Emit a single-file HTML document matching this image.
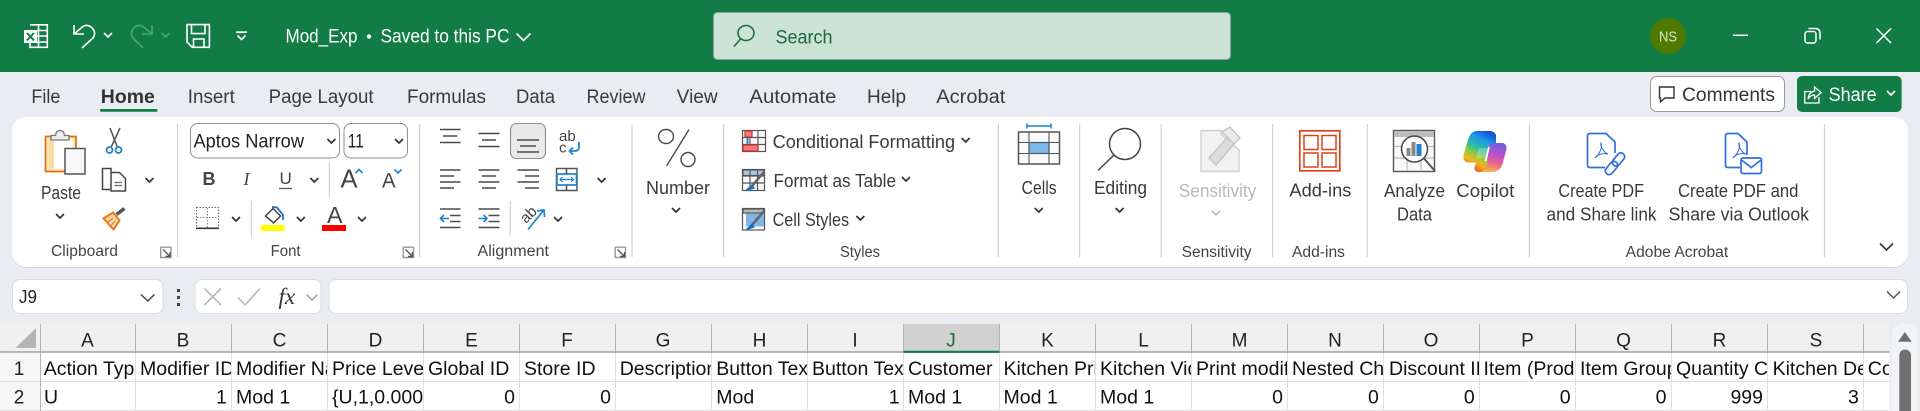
<!DOCTYPE html>
<html lang="en">
<head>
<meta charset="utf-8">
<title>Mod_Exp - Excel</title>
<style>
html,body{margin:0;padding:0;width:1920px;height:411px;overflow:hidden;background:#e9edf1}
svg{display:block;font-family:"Liberation Sans",sans-serif}
text{fill:#3a3a3a;font-size:18.5px}
.tab text{font-size:19px}
.w text{fill:#fff;font-size:19px}
.lab text{font-size:15.5px;fill:#444}
.cell text{font-size:19.5px;fill:#111}
.hd text{font-size:19px;fill:#222;text-anchor:middle}
.ln{fill:none;stroke:#4a4a4a;stroke-width:1.6}
</style>
</head>
<body>
<svg width="1920" height="411" viewBox="0 0 1920 411" xmlns="http://www.w3.org/2000/svg">
<defs>
<path id="c" d="M-4-2L0 2 4-2" fill="none" stroke="#333" stroke-width="1.700"/>
<path id="cw" d="M-4-2L0 2 4-2" fill="none" stroke="#fff" stroke-width="1.600"/>
<g id="lau" fill="none" stroke="#555" stroke-width="1.400"><path d="M0.700 0.700H11V11H0.700Z" stroke="#999"/><path d="M3 3L10 10M10 5.500V10H5.500"/></g>
<linearGradient id="cp1" x1="0.700" y1="0" x2="0.300" y2="1"><stop offset="0" stop-color="#1550d8"/><stop offset=".22" stop-color="#1d9be8"/><stop offset=".45" stop-color="#2fc09a"/><stop offset=".62" stop-color="#9ccb35"/><stop offset=".78" stop-color="#f5b21c"/><stop offset="1" stop-color="#ee3f33"/></linearGradient>
<linearGradient id="cp2" x1="0.600" y1="0" x2="0.400" y2="1"><stop offset="0" stop-color="#6a5fe0"/><stop offset=".35" stop-color="#b44fd0"/><stop offset=".65" stop-color="#e85f9a"/><stop offset="1" stop-color="#fbb04a"/></linearGradient>
</defs>

<rect width="1920" height="411" fill="#e9edf1"/>
<!-- title bar -->
<rect width="1920" height="72" fill="#117c45"/>
<g fill="none" stroke="#fff" stroke-width="1.600">
<path d="M30 24.800H47.300V47.300H30V43M38.500 24.800V47.300M37 30.500H47.300M37 36H47.300M37 42H47.300"/>
<rect x="24" y="30" width="13" height="13" fill="#fff" stroke="none"/>
<path d="M27 33L34 40.500M34 33L27 40.500" stroke="#117c45" stroke-width="2"/>
<path d="M74 25V34H84M74 34L83 26.500Q87 24 91 27Q97 32 93 38L82 48"/>
<path d="M152 25V34H142M152 34L143 26.500Q139 24 135 27Q129 32 133 38L143 48" stroke="#4fa27c"/>
<path d="M187 24.600H209.400V47.300H192.300L187 42Z"/>
<path d="M191.500 24.600V33.600H205V24.600M193.500 47.300V39H204V47.300"/>
<path d="M236 32.200H247" stroke-width="1.800"/>
<path d="M237.500 35.500L241.500 39.500 245.500 35.500" stroke-width="1.600"/>
<path d="M516.500 33.500L523.500 40.500 530.500 33.500" stroke-width="1.600"/>
</g>
<use href="#cw" x="108" y="35"/>
<path d="M161.500 33L165.500 37 169.500 33" fill="none" stroke="#4fa27c" stroke-width="1.600"/>
<g class="w">
<text x="285.500" y="42.500" textLength="72" lengthAdjust="spacingAndGlyphs">Mod_Exp</text>
<circle cx="369" cy="36.500" r="2.200" fill="#fff"/>
<text x="380.500" y="42.500" textLength="129" lengthAdjust="spacingAndGlyphs">Saved to this PC</text>
</g>
<rect x="713.500" y="12.500" width="517" height="47" rx="4" fill="#cde2d6" stroke="#8aa595"/>
<ellipse cx="746" cy="33" rx="8" ry="7.500" fill="none" stroke="#17683e" stroke-width="1.500"/>
<path d="M740.500 39L734 46.500" stroke="#17683e" stroke-width="1.500"/>
<text x="775.500" y="43.500" textLength="57" lengthAdjust="spacingAndGlyphs" style="fill:#17693f;font-size:19px">Search</text>
<circle cx="1668" cy="36" r="18" fill="#4f7a00"/>
<text x="1659" y="41.500" textLength="18" lengthAdjust="spacingAndGlyphs" style="font-size:15px;fill:#d8e8c8">NS</text>
<path d="M1733 35.300H1748" stroke="#fff" stroke-width="1.500"/>
<g fill="none" stroke="#fff" stroke-width="1.500">
<rect x="1805" y="31.500" width="11" height="11.500" rx="2.500"/>
<path d="M1808.500 28.500H1815Q1820 28.500 1820 33V39.500"/>
<path d="M1876.500 28.500L1891 43M1891 28.500L1876.500 43"/>
</g>

<!-- tabs -->
<g class="tab">
<text x="31.400" y="103" textLength="29" lengthAdjust="spacingAndGlyphs">File</text>
<text x="100.800" y="103" textLength="54" lengthAdjust="spacingAndGlyphs" style="font-weight:bold;fill:#333">Home</text>
<text x="187.800" y="103" textLength="47" lengthAdjust="spacingAndGlyphs">Insert</text>
<text x="268.600" y="103" textLength="105" lengthAdjust="spacingAndGlyphs">Page Layout</text>
<text x="407" y="103" textLength="79" lengthAdjust="spacingAndGlyphs">Formulas</text>
<text x="516" y="103" textLength="39" lengthAdjust="spacingAndGlyphs">Data</text>
<text x="586.500" y="103" textLength="59" lengthAdjust="spacingAndGlyphs">Review</text>
<text x="676.700" y="103" textLength="41" lengthAdjust="spacingAndGlyphs">View</text>
<text x="749.400" y="103" textLength="87" lengthAdjust="spacingAndGlyphs">Automate</text>
<text x="867" y="103" textLength="39" lengthAdjust="spacingAndGlyphs">Help</text>
<text x="936.300" y="103" textLength="69" lengthAdjust="spacingAndGlyphs">Acrobat</text>
</g>
<rect x="100" y="109" width="57.500" height="2.800" rx="1.400" fill="#117c45"/>

<rect x="1650.500" y="76.500" width="134" height="35" rx="6" fill="#fff" stroke="#9a9a9a"/>
<path d="M1659.500 87H1674V98H1665L1660.500 102V98H1659.500Z" fill="none" stroke="#333" stroke-width="1.400"/>
<text x="1682" y="101" textLength="93" lengthAdjust="spacingAndGlyphs" style="fill:#333;font-size:19px">Comments</text>
<rect x="1797" y="76" width="104.600" height="36" rx="5" fill="#117c45"/>
<g fill="none" stroke="#fff" stroke-width="1.300">
<path d="M1811 91.500H1804.700V103H1819V97"/>
<path d="M1808 99C1808.500 94 1811.500 91.500 1814.500 91V87L1821 92.500 1814.500 98.500V95C1812 95 1809.500 96.500 1808 99Z"/>
</g>
<g class="w"><text x="1828.600" y="101" textLength="48" lengthAdjust="spacingAndGlyphs">Share</text></g>
<use href="#cw" x="1891" y="93"/>

<!-- ribbon -->
<rect x="12" y="118" width="1896" height="150" rx="14" fill="#c9ced3" opacity=".7"/>
<rect x="12" y="117" width="1896" height="150" rx="14" fill="#fff"/>
<g stroke="#d2d2d2" stroke-width="1.200">
<path d="M177.500 124V257M419.600 124V257M632 124V257M723.700 124V257M998.400 124V257M1079.600 124V257M1161.200 124V257M1272.600 124V257M1367.300 124V257M1529.400 124V257M1824.500 124V257M329.400 162.500V197M251.400 201V236.500M510.300 201V236.500"/>
</g>

<!-- clipboard -->
<rect x="45.500" y="136.500" width="30.500" height="35" fill="#fde9bf" stroke="#dd7410" stroke-width="1.800"/>
<rect x="49" y="139.500" width="23.500" height="29" fill="#fff"/>
<rect x="49" y="139.500" width="5" height="29" fill="#fbdc9e"/>
<path d="M51 140V135.500H55.500Q56 130.500 60 130.500Q64 130.500 64.500 135.500H69V140Z" fill="#eee" stroke="#777" stroke-width="1.300"/>
<rect x="65" y="148.500" width="20" height="25.500" fill="#f8f8f8" stroke="#555" stroke-width="1.500"/>
<text x="41" y="199" textLength="40" lengthAdjust="spacingAndGlyphs">Paste</text>
<use href="#c" x="60" y="216"/>
<g fill="none" stroke-width="1.500">
<path d="M110 128L117.500 147.500M120 128L111 147.500" stroke="#555"/>
<circle cx="109.500" cy="150" r="3" stroke="#1c82cc" stroke-width="1.800"/>
<circle cx="118.500" cy="150" r="3" stroke="#1c82cc" stroke-width="1.800"/>
<path d="M111 172V168.500H102.500V189.500H110" stroke="#444"/>
<path d="M111 172.500H119.500L125.500 178.500V191H111Z" fill="#fff" stroke="#444"/>
<path d="M114.500 182.500H122M114.500 185.500H122" stroke="#666" stroke-width="1.200"/>
<path d="M103.500 218.500L113 212.500 119.500 220.500 113.500 229.500Z" fill="#fcd9a8" stroke="#e8791a" stroke-width="2"/>
<path d="M107 223L113 218M110.500 226L115 221" stroke="#e8791a" stroke-width="1.200"/>
<path d="M116.500 214.500L124.500 208.500" stroke="#555" stroke-width="3.500"/>
</g>
<use href="#c" x="149.500" y="180"/>
<g class="lab">
<text x="51" y="256" textLength="67" lengthAdjust="spacingAndGlyphs">Clipboard</text>
<text x="270.600" y="256" textLength="30" lengthAdjust="spacingAndGlyphs">Font</text>
<text x="477.500" y="256" textLength="71.500" lengthAdjust="spacingAndGlyphs">Alignment</text>
<text x="840" y="257" textLength="40" lengthAdjust="spacingAndGlyphs">Styles</text>
<text x="1181.600" y="257" textLength="70" lengthAdjust="spacingAndGlyphs">Sensitivity</text>
<text x="1292" y="257" textLength="53" lengthAdjust="spacingAndGlyphs">Add-ins</text>
<text x="1625.700" y="257" textLength="102.500" lengthAdjust="spacingAndGlyphs">Adobe Acrobat</text>
</g>
<use href="#lau" x="160" y="246.500"/>
<use href="#lau" x="402.500" y="246.500"/>
<use href="#lau" x="614.500" y="246.500"/>

<!-- font -->
<rect x="190.500" y="123.500" width="149" height="34.500" rx="7" fill="#fff" stroke="#8e8e8e"/>
<rect x="344" y="123.500" width="63.500" height="34.500" rx="7" fill="#fff" stroke="#8e8e8e"/>
<text x="193.500" y="147.500" textLength="110.500" lengthAdjust="spacingAndGlyphs" style="font-size:19px;fill:#222">Aptos Narrow</text>
<text x="347.800" y="147.500" textLength="16" lengthAdjust="spacingAndGlyphs" style="font-size:19px;fill:#222">11</text>
<use href="#c" x="331.400" y="141"/>
<use href="#c" x="399" y="141"/>
<text x="202.500" y="185" style="font-weight:bold;font-size:18px;fill:#444">B</text>
<text x="243.500" y="185" style="font-style:italic;font-size:18px;font-family:'Liberation Serif',serif;fill:#444">I</text>
<text x="279.500" y="184" style="font-size:17px;fill:#444">U</text>
<path d="M279 188.500H292" stroke="#555" stroke-width="1.300"/>
<use href="#c" x="314.300" y="180"/>
<text x="340.500" y="187.500" textLength="17" lengthAdjust="spacingAndGlyphs" style="font-size:26px;fill:#444">A</text>
<path d="M355.500 173L359 169.500 362.500 173" fill="none" stroke="#1c82cc" stroke-width="1.600"/>
<text x="382" y="187.500" textLength="13.500" lengthAdjust="spacingAndGlyphs" style="font-size:21px;fill:#444">A</text>
<path d="M394.500 169.500L398 173 401.500 169.500" fill="none" stroke="#1c82cc" stroke-width="1.600"/>
<rect x="196.500" y="207.500" width="22" height="20.500" fill="none" stroke="#666" stroke-width="1.100" stroke-dasharray="1.500 1.500"/>
<path d="M207.500 208V228M197 217.500H218" stroke="#888" stroke-width="1.100" stroke-dasharray="1.500 1.500"/>
<path d="M196 228.300H219" stroke="#333" stroke-width="1.600"/>
<use href="#c" x="236" y="219"/>
<path d="M265.500 216L273 208.500 280.500 216 273.500 223Z" fill="#fff" stroke="#444" stroke-width="1.500"/>
<path d="M273 208.500V207L277 207.500 283 215V220" fill="none" stroke="#1c6fc0" stroke-width="1.800"/>
<rect x="260.800" y="225" width="23.700" height="6" fill="#ffff00"/>
<use href="#c" x="300.800" y="219"/>
<text x="327" y="223" textLength="15.500" lengthAdjust="spacingAndGlyphs" style="font-size:23px;fill:#444">A</text>
<rect x="322" y="225" width="24" height="6" fill="#f00"/>
<use href="#c" x="362" y="219"/>

<!-- alignment -->
<g fill="none" stroke="#4a4a4a" stroke-width="1.600">
<path d="M440 129.500H460.500M443 136H457.500M440 142.500H460.500"/>
<path d="M478.500 133.500H499.500M482 140H496M478.500 146.500H499.500"/>
<rect x="510.500" y="123.500" width="35" height="35" rx="6" fill="#e9e9e9" stroke="#8e8e8e" stroke-width="1.100"/>
<path d="M517 140H539M520 146H536M517 152H539"/>
<path d="M440 170H460.500M440 176H454M440 182H460.500M440 188H454"/>
<path d="M478.500 170H499.500M482 176H496M478.500 182H499.500M482 188H496"/>
<path d="M517.500 170H539M525 176H539M517.500 182H539M525 188H539"/>
<path d="M440 209H460.500M450 215.500H460.500M450 221.500H460.500M440 227.500H460.500"/>
<path d="M478.500 209H499.500M488.500 215.500H499.500M488.500 221.500H499.500M478.500 227.500H499.500"/>
<path d="M449 218.500H440.500M444 215L440.500 218.500 444 222" stroke="#1c82cc"/>
<path d="M478.500 218.500H487M483.500 215L487 218.500 483.500 222" stroke="#1c82cc"/>
<path d="M579 142V147Q579 151 575 151H569.500M573 147.500L569.500 151 573 154.500" stroke="#1c82cc" stroke-width="1.800"/>
<rect x="556.500" y="168.500" width="20.500" height="22" stroke="#555" stroke-width="1.500"/>
<rect x="557" y="174" width="19.500" height="11" fill="#fff" stroke="#1c82cc" stroke-width="1.700"/>
<path d="M560 179.500H573.500M562.500 177L560 179.500 562.500 182M571 177L573.500 179.500 571 182" stroke="#1c82cc" stroke-width="1.200"/>
<path d="M566.500 168.500V174M566.500 185V190.500" stroke="#555"/>
<path d="M528 229.500L543.500 210.500M537 211L544 210 544.500 217" stroke="#1c82cc" stroke-width="1.700"/>
</g>
<text x="559" y="141" style="font-size:15px;fill:#444">ab</text>
<text x="559" y="152.500" style="font-size:15px;fill:#444">c</text>
<text transform="translate(526,224) rotate(-45)" style="font-size:15px;fill:#444">ab</text>
<use href="#c" x="601.600" y="180"/>
<use href="#c" x="558" y="219"/>

<!-- number -->
<g fill="none" stroke="#4a4a4a" stroke-width="1.400">
<ellipse cx="666" cy="136.500" rx="7.500" ry="7"/>
<ellipse cx="688" cy="159.500" rx="7" ry="7"/>
<path d="M689 129.500L666.500 166"/>
</g>
<text x="646" y="194" textLength="64" lengthAdjust="spacingAndGlyphs">Number</text>
<use href="#c" x="676" y="210"/>

<!-- styles -->
<g stroke-width="1.200" fill="none" stroke="#555">
<rect x="742.500" y="130.500" width="23" height="21" fill="#fafafa"/>
<path d="M750 130.500V152M758 130.500V152M742.500 137.500H765.500M742.500 144.500H765.500"/>
<rect x="745" y="131" width="7" height="6" fill="#f27a7a" stroke="#c33"/>
<rect x="743" y="145" width="15" height="6" fill="#f27a7a" stroke="#c33"/>
<path d="M747.500 138V144" stroke="#1c82cc" stroke-width="2"/>
<rect x="742.500" y="169.500" width="22" height="21" fill="#fafafa"/>
<rect x="743" y="170" width="21" height="5.500" fill="#a8c8e8"/>
<path d="M750 169.500V190.500M757.500 169.500V190.500M742.500 176H764.500M742.500 183H764.500"/>
<path d="M764 172L752 186" stroke="#666" stroke-width="2.500"/>
<path d="M752 185L746 190.500 754 188Z" fill="#1c6fc0" stroke="#1c6fc0"/>
<rect x="742.500" y="208.500" width="22" height="21.500" fill="#fafafa"/>
<rect x="743" y="209" width="21" height="4" fill="#bbb"/>
<rect x="746" y="213.500" width="18" height="13" fill="#7fb4e6" stroke="none"/>
<path d="M764 211L752 225" stroke="#666" stroke-width="2.500"/>
<path d="M752 224L746 230 754 227Z" fill="#1c6fc0" stroke="#1c6fc0"/>
</g>
<text x="772.600" y="148" textLength="182.500" lengthAdjust="spacingAndGlyphs">Conditional Formatting</text>
<text x="773.500" y="187" textLength="122.500" lengthAdjust="spacingAndGlyphs">Format as Table</text>
<text x="772.600" y="226" textLength="76.500" lengthAdjust="spacingAndGlyphs">Cell Styles</text>
<use href="#c" x="965.700" y="140"/>
<use href="#c" x="906" y="179"/>
<use href="#c" x="860.400" y="218"/>

<!-- cells -->
<path d="M1027 126H1051M1027 123.500V128.500M1051 123.500V128.500" stroke="#1c82cc" stroke-width="1.500" fill="none"/>
<rect x="1018.500" y="132" width="41" height="32" fill="#fbfbfb" stroke="#555" stroke-width="1.500"/>
<rect x="1029" y="142.500" width="20" height="11" fill="#7db8ea" stroke="#1c6fc0" stroke-width="1.200"/>
<path d="M1029 132V164M1049 132V164M1018.500 142.500H1059.500M1018.500 153.500H1059.500" fill="none" stroke="#555" stroke-width="1.100"/>
<text x="1021.600" y="194" textLength="35" lengthAdjust="spacingAndGlyphs">Cells</text>
<use href="#c" x="1038.800" y="210"/>

<!-- editing -->
<ellipse cx="1125" cy="144" rx="15.500" ry="15.500" fill="none" stroke="#444" stroke-width="1.500"/>
<path d="M1114 155L1098 170.500" stroke="#444" stroke-width="1.500"/>
<text x="1094" y="194" textLength="53" lengthAdjust="spacingAndGlyphs">Editing</text>
<use href="#c" x="1119.600" y="210"/>

<!-- sensitivity -->
<path d="M1201 130.500H1221V134L1239 150V171.500H1201Z" fill="#f1f1f1" stroke="#cfcfcf" stroke-width="1.400"/>
<path d="M1209 158L1227 138 1234 144 1216 165Z" fill="#ddd" stroke="#c4c4c4" stroke-width="1.400"/>
<path d="M1222 132L1230 127 1240 138 1234 144Z" fill="#eaeaea" stroke="#c4c4c4" stroke-width="1.400"/>
<text x="1178.800" y="197" textLength="77.500" lengthAdjust="spacingAndGlyphs" style="fill:#b9b9b9">Sensitivity</text>
<path d="M1212 211L1216 215 1220 211" fill="none" stroke="#bbb" stroke-width="1.600"/>

<!-- add-ins -->
<rect x="1299.800" y="130.800" width="40" height="40" fill="#fff" stroke="#d9431a" stroke-width="1.700"/>
<g fill="none" stroke="#d9431a" stroke-width="1.500">
<rect x="1304" y="135.500" width="14" height="14"/><rect x="1322" y="135.500" width="14" height="14"/>
<rect x="1304" y="153" width="14" height="14"/><rect x="1322" y="153" width="14" height="14"/>
</g>
<text x="1289.400" y="196.500" textLength="62" lengthAdjust="spacingAndGlyphs">Add-ins</text>

<!-- analyze -->
<rect x="1393.500" y="130.500" width="41" height="41" fill="#f8f8f8" stroke="#555" stroke-width="1.400"/>
<rect x="1394" y="131" width="40" height="6" fill="#bdbdbd"/>
<path d="M1394 146.500H1434M1394 158H1434M1407 158V171M1421 158V171" stroke="#bbb" stroke-width="1.200" fill="none"/>
<circle cx="1414.500" cy="149" r="13" fill="#fff" stroke="#444" stroke-width="1.500"/>
<path d="M1424 158.500L1435 171" stroke="#555" stroke-width="2"/>
<rect x="1406.500" y="148" width="4" height="8" fill="#888"/>
<rect x="1411.500" y="142" width="4" height="14" fill="#888"/>
<rect x="1416.500" y="144" width="5" height="12" fill="#1c82cc"/>
<text x="1384" y="197" textLength="61" lengthAdjust="spacingAndGlyphs">Analyze</text>
<text x="1397" y="220.500" textLength="35" lengthAdjust="spacingAndGlyphs">Data</text>

<!-- copilot -->
<path d="M1476 131C1471 132 1469.500 135.500 1468 140L1463.500 155C1462.500 160 1465.500 162.500 1469 162.500H1476L1474.500 167C1473.500 170 1476 172 1479 172H1484C1486.500 170 1487.500 167 1488.500 163L1493 146C1494 143 1496 143 1496 143V135C1495 132.500 1492.500 131 1490 131Z" fill="url(#cp1)"/>
<path d="M1489 146.500C1490 144 1491.500 143 1493.500 143H1502C1505 143 1507 146 1506.500 149L1503 162C1502 168 1498 172 1492 172H1480C1484 171 1486 168 1487 164Z" fill="url(#cp2)"/>
<path d="M1479 148H1490L1487 158H1476Z" fill="#fff" opacity=".25"/>
<path d="M1489 147L1485.500 161" stroke="#fff" stroke-width="1.800"/>
<text x="1456.300" y="197" textLength="58" lengthAdjust="spacingAndGlyphs">Copilot</text>

<!-- acrobat -->
<g fill="none" stroke="#2f6fde" stroke-width="1.700">
<path d="M1605 167.500H1590Q1587.500 167.500 1587.500 165V136Q1587.500 133.500 1590 133.500H1606L1615 142V153"/>
<path d="M1595 158C1599 155 1603 147 1601 143C1600 146 1604 153 1608 154C1604 153 1597 154 1595 158Z" stroke-width="1"/>
<rect x="-7.500" y="-3.800" width="15" height="7.600" rx="3.800" transform="translate(1611.500,168) rotate(-50)"/>
<rect x="-7.500" y="-3.800" width="15" height="7.600" rx="3.800" transform="translate(1618.500,159.500) rotate(-50)"/>
<path d="M1747 155V142L1738 133.500H1728Q1725.500 133.500 1725.500 136V165Q1725.500 167.500 1728 167.500H1740"/>
<path d="M1733 158C1737 155 1741 147 1739 143C1738 146 1742 153 1746 154C1742 153 1735 154 1733 158Z" stroke-width="1"/>
<rect x="1741" y="158" width="20.500" height="15.500" rx="2" fill="#fff"/>
<path d="M1741.500 160L1751.300 167.500 1761 160"/>
</g>
<text x="1558.400" y="197" textLength="85.600" lengthAdjust="spacingAndGlyphs">Create PDF</text>
<text x="1546.500" y="220.500" textLength="110" lengthAdjust="spacingAndGlyphs">and Share link</text>
<text x="1678" y="197" textLength="120.400" lengthAdjust="spacingAndGlyphs">Create PDF and</text>
<text x="1668.600" y="220.500" textLength="140.400" lengthAdjust="spacingAndGlyphs">Share via Outlook</text>
<path d="M1880 243.500L1886.500 250 1893 243.500" fill="none" stroke="#333" stroke-width="1.600"/>

<!-- formula bar -->
<rect x="12.500" y="279.500" width="150.500" height="34" rx="7" fill="#fff" stroke="#dcdcdc"/>
<text x="19" y="303" textLength="18" lengthAdjust="spacingAndGlyphs" style="fill:#222">J9</text>
<path d="M141 294.500L147.800 301 154.500 294.500" fill="none" stroke="#444" stroke-width="1.500"/>
<g fill="#444"><rect x="177" y="289" width="3" height="3"/><rect x="177" y="296" width="3" height="3"/><rect x="177" y="303" width="3" height="3"/></g>
<rect x="195" y="279.500" width="126" height="34" rx="7" fill="#fff" stroke="#dcdcdc"/>
<path d="M204.500 288.500L221 305M221 288.500L204.500 305" stroke="#b8b8b8" stroke-width="1.600" fill="none"/>
<path d="M238 297.500L245 305 260 288.500" stroke="#b8b8b8" stroke-width="1.600" fill="none"/>
<text x="278.500" y="304" style="font-family:'Liberation Serif',serif;font-style:italic;font-size:23px;fill:#333">fx</text>
<path d="M306.500 294.500L312 300 317.500 294.500" fill="none" stroke="#999" stroke-width="1.400"/>
<rect x="329" y="279.500" width="1578.500" height="34" rx="7" fill="#fff" stroke="#dcdcdc"/>
<path d="M1887 291.500L1893.500 298 1900 291.500" fill="none" stroke="#555" stroke-width="1.500"/>

<!-- scrollbar -->
<path d="M1891.700 411V335A12 12 0 0 1 1903.700 323.300H1906.300A12 12 0 0 1 1918.300 335V411Z" fill="#f1f3f5"/>
<path d="M1898 341.700L1904.800 332 1911.700 341.700Z" fill="#6f6f6f"/>
<rect x="1899.300" y="349.500" width="11.700" height="80" rx="5.800" fill="#707070"/>

<!-- grid -->
<rect x="0" y="324" width="1889.300" height="28" fill="#f0f0f0"/>
<rect x="0" y="352" width="40" height="59" fill="#f6f6f6"/>
<rect x="40" y="352" width="1849.300" height="59" fill="#fff"/>
<rect x="903.500" y="324" width="96" height="28" fill="#d1d1d1"/>
<path d="M36 328V348H15.500Z" fill="#b4b4b4"/>
<g stroke="#e0e0e0" stroke-width="1" fill="none">
<path d="M40 381.500H1889.300M0 410.500H1889.300M0 381.500H40"/>
<path d="M135.500 352V411M231.500 352V411M327.500 352V411M423.500 352V411M519.500 352V411M615.500 352V411M711.500 352V411M807.500 352V411M903.500 352V411M999.500 352V411M1095.500 352V411M1191.500 352V411M1287.500 352V411M1383.500 352V411M1479.500 352V411M1575.500 352V411M1671.500 352V411M1767.500 352V411M1863.500 352V411"/>
</g>
<g stroke="#b4b4b4" stroke-width="1" fill="none">
<path d="M40.500 324V411M135.500 324V352M231.500 324V352M327.500 324V352M423.500 324V352M519.500 324V352M615.500 324V352M711.500 324V352M807.500 324V352M903.500 324V352M999.500 324V352M1095.500 324V352M1191.500 324V352M1287.500 324V352M1383.500 324V352M1479.500 324V352M1575.500 324V352M1671.500 324V352M1767.500 324V352M1863.500 324V352"/>
</g>
<path d="M0 352H1889.300" stroke="#a0a0a0" stroke-width="1.500"/>
<path d="M903.500 351.800H999.500" stroke="#117c45" stroke-width="2.200"/>

<g class="hd">
<text x="87.500" y="346.500">A</text><text x="183" y="346.500">B</text><text x="279.500" y="346.500">C</text><text x="375.500" y="346.500">D</text><text x="471.500" y="346.500">E</text><text x="567" y="346.500">F</text><text x="663" y="346.500">G</text><text x="759.500" y="346.500">H</text><text x="855" y="346.500">I</text><text x="951" y="346.500" style="fill:#1b6b43">J</text><text x="1047.500" y="346.500">K</text><text x="1143.500" y="346.500">L</text><text x="1239.500" y="346.500">M</text><text x="1335" y="346.500">N</text><text x="1431" y="346.500">O</text><text x="1527.500" y="346.500">P</text><text x="1623.500" y="346.500">Q</text><text x="1719.500" y="346.500">R</text><text x="1816" y="346.500">S</text>
<text x="19" y="375">1</text><text x="19" y="403.500">2</text>
</g>

<g class="cell">
<svg x="41" y="352" width="94" height="29"><text x="2.700" y="23">Action Type</text></svg>
<svg x="136" y="352" width="95" height="29"><text x="4" y="23">Modifier ID</text></svg>
<svg x="232" y="352" width="95" height="29"><text x="4" y="23">Modifier Name</text></svg>
<svg x="328" y="352" width="95" height="29"><text x="4" y="23">Price Level</text></svg>
<svg x="424" y="352" width="95" height="29"><text x="4" y="23">Global ID</text></svg>
<svg x="520" y="352" width="95" height="29"><text x="4" y="23">Store ID</text></svg>
<svg x="616" y="352" width="95" height="29"><text x="3.700" y="23">Description</text></svg>
<svg x="712" y="352" width="95" height="29"><text x="4.300" y="23">Button Text</text></svg>
<svg x="808" y="352" width="95" height="29"><text x="4" y="23">Button Text</text></svg>
<svg x="904" y="352" width="95" height="29"><text x="4" y="23">Customer</text></svg>
<svg x="1000" y="352" width="95" height="29"><text x="3.500" y="23">Kitchen Print</text></svg>
<svg x="1096" y="352" width="95" height="29"><text x="4" y="23">Kitchen Video</text></svg>
<svg x="1192" y="352" width="95" height="29"><text x="4" y="23">Print modifier</text></svg>
<svg x="1288" y="352" width="95" height="29"><text x="4" y="23">Nested Child</text></svg>
<svg x="1384" y="352" width="95" height="29"><text x="5" y="23">Discount ID</text></svg>
<svg x="1480" y="352" width="95" height="29"><text x="3.500" y="23">Item (Product</text></svg>
<svg x="1576" y="352" width="95" height="29"><text x="4" y="23">Item Group</text></svg>
<svg x="1672" y="352" width="95" height="29"><text x="4" y="23">Quantity C</text></svg>
<svg x="1768" y="352" width="95" height="29"><text x="4.600" y="23">Kitchen De</text></svg>
<svg x="1864" y="352" width="25" height="29"><text x="3.800" y="23">Count</text></svg>

<text x="44" y="403.500">U</text>
<text x="226.800" y="403.500" text-anchor="end">1</text>
<text x="236" y="403.500">Mod 1</text>
<svg x="328" y="382" width="95" height="28"><text x="4" y="21.500">{U,1,0.000</text></svg>
<text x="515" y="403.500" text-anchor="end">0</text>
<text x="611" y="403.500" text-anchor="end">0</text>
<text x="716.300" y="403.500">Mod</text>
<text x="899.600" y="403.500" text-anchor="end">1</text>
<text x="908" y="403.500">Mod 1</text>
<text x="1003.500" y="403.500">Mod 1</text>
<text x="1100" y="403.500">Mod 1</text>
<text x="1283" y="403.500" text-anchor="end">0</text>
<text x="1378.800" y="403.500" text-anchor="end">0</text>
<text x="1474.700" y="403.500" text-anchor="end">0</text>
<text x="1570.600" y="403.500" text-anchor="end">0</text>
<text x="1666.500" y="403.500" text-anchor="end">0</text>
<text x="1763" y="403.500" text-anchor="end">999</text>
<text x="1858.800" y="403.500" text-anchor="end">3</text>
</g>
</svg>
</body>
</html>
